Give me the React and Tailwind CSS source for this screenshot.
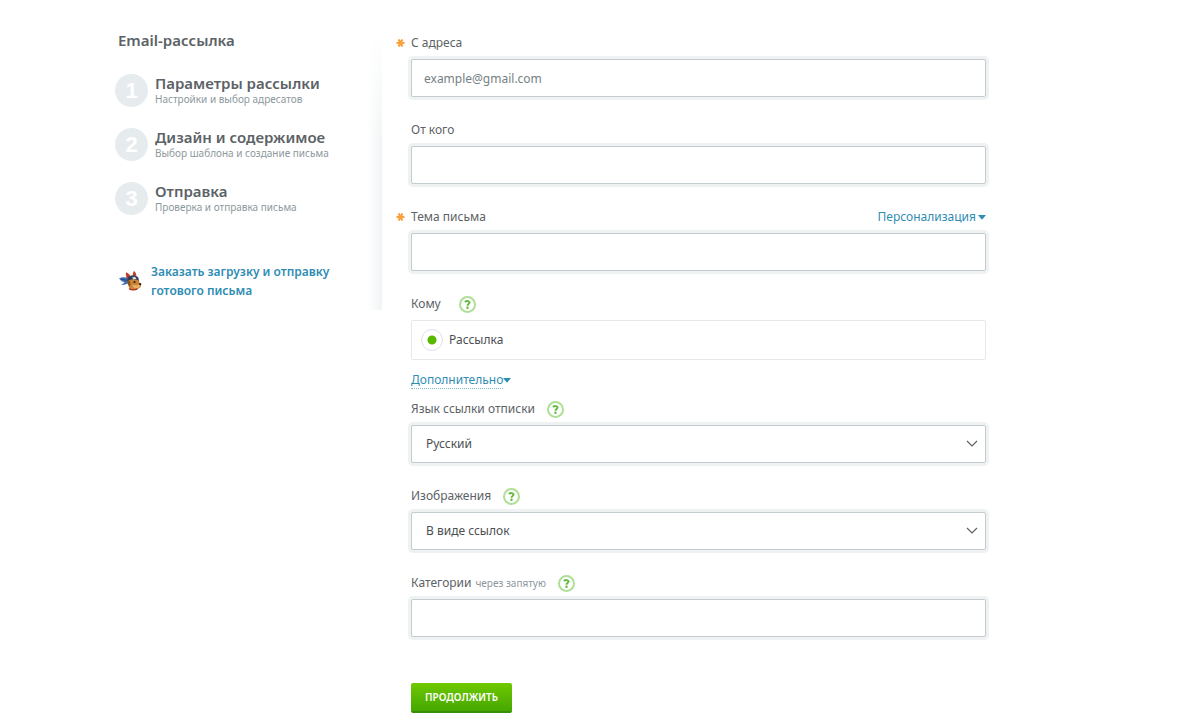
import { useState } from "react";
import clsx from "clsx";

const steps = [
  { title: "Параметры рассылки", text: "Настройки и выбор адресатов" },
  { title: "Дизайн и содержимое", text: "Выбор шаблона и создание письма" },
  { title: "Отправка", text: "Проверка и отправка письма" },
];

const controlClass =
  "block w-full h-[38px] px-3 rounded-xs border border-[#c3cccf] bg-white text-[12px] text-[#4b4f51] shadow-[0_0_0_3px_#eff2f2] outline-none placeholder:text-[#757f83] focus:border-[#8fb8c8]";

const Mascot = () => (
  <svg width="24" height="22" viewBox="0 0 24 22" className="shrink-0" aria-hidden="true">
    <path d="M1 8.500C4 6.500 7 7 11 8l1 4.500C8.500 14 6 15.500 3 15c2-1 3-2 3.500-3C4.500 12 3 11 1 8.500z" fill="#3f6fb8" />
    <path d="M3 9c3 .8 5 1.500 8 1.200" stroke="#24427c" strokeWidth="1" fill="none" />
    <path d="M8 2.200c2 .8 3.500 2 4.500 4L9 8.500C8 6.500 7.600 4.500 8 2.200z" fill="#c33a2d" />
    <path d="M16 1c1.600 1.200 2.400 3 2.300 5l-3.500-.5C14.800 3.800 15 2.400 16 1z" fill="#c33a2d" />
    <path d="M9.500 8c2-3.500 8.500-4 11 0l.5 4-11 3z" fill="#343a55" />
    <path d="M10 11c3-2 7-2.500 10.500-.5 1 1.500 1.600 3 2.500 4.500.3 1.800-1 3-2.500 3.500-2.500 2-6.500 2-8.500.5C10.500 17 9.500 14 10 11z" fill="#c98535" />
    <path d="M14 15c2 .5 5 .5 8-.5.5 2-1 3.200-3 3.800-2 .3-4-.8-5-3.300z" fill="#e8b468" />
    <path d="M9.500 9.500c2.500 1 3.500 3.500 2.500 7-2-1.500-3-4-2.500-7z" fill="#8a4b20" />
    <path d="M14 7.500l3-.8 1.500 2-3 .8z" fill="#d7dde8" />
    <circle cx="16.500" cy="12" r="1" fill="#231a16" />
    <circle cx="22.200" cy="14.200" r="1.100" fill="#231a16" />
    <path d="M11 18.500c2 1.800 6 2 8.500.3" stroke="#a83225" strokeWidth="1.200" fill="none" />
  </svg>
);

const Caret = () => (
  <svg width="8" height="5" viewBox="0 0 8 5" className="shrink-0" aria-hidden="true">
    <path d="M0 0h8L4 4.800z" fill="#2f8db3" />
  </svg>
);

const Help = () => (
  <button
    type="button"
    aria-label="Справка"
    className="ml-3 flex size-[17px] shrink-0 items-center justify-center rounded-full border-2 border-[#addf95] bg-white"
  >
    <svg width="7" height="9" viewBox="0 0 7 9" fill="none" aria-hidden="true">
      <path d="M1 2.200C2.200.7 5.500.7 5.500 2.600 5.500 4 3.500 4 3.500 5.700" stroke="#62bb3c" strokeWidth="2" />
      <circle cx="3.500" cy="7.800" r="1.200" fill="#62bb3c" />
    </svg>
  </button>
);

const Asterisk = () => (
  <svg
    width="9"
    height="8"
    viewBox="0 0 9 8"
    className="absolute top-1.5 -left-[15px]"
    aria-hidden="true"
  >
    <path d="M.5 4h8M2.600.5l3.800 7M6.400.5l-3.800 7" stroke="#f9a13c" strokeWidth="2.200" />
  </svg>
);

const Field = ({ id, label, hint, required, help, action, children }) => (
  <div className="mb-[23px]">
    <div className="relative mb-1.5 flex h-5 items-center">
      {required && <Asterisk />}
      <label htmlFor={id}>
        {label}
        {hint && <span className="ml-1 text-[10px] text-[#8d989d]">{hint}</span>}
      </label>
      {help && <Help />}
      {action}
    </div>
    {children}
  </div>
);

const Select = ({ id, options }) => (
  <div className="relative">
    <select id={id} className={clsx(controlClass, "appearance-none pl-3.5 pr-10")}>
      {options.map((option) => (
        <option key={option}>{option}</option>
      ))}
    </select>
    <svg
      width="12"
      height="8"
      viewBox="0 0 12 8"
      fill="none"
      className="pointer-events-none absolute top-[15px] right-2"
      aria-hidden="true"
    >
      <path d="M1 1l5 5 5-5" stroke="#5d6163" strokeWidth="1.200" />
    </svg>
  </div>
);

const Sidebar = () => (
  <aside className="flex h-[280px] w-[267px] shrink-0 justify-between">
    <div className="w-[230px]">
      <h1 className="ml-[3px] h-5 text-[15px] leading-5 font-semibold">Email-рассылка</h1>
      <ol className="mt-[22px] flex flex-col gap-[18px]">
        {steps.map((step, index) => (
          <li key={step.title} className="flex items-center gap-[7px]">
            <span className="flex size-[33px] shrink-0 items-center justify-center rounded-full bg-[#e6ecee] font-['Liberation_Sans',sans-serif] text-[22px] font-bold text-white">
              {index + 1}
            </span>
            <div className="h-9 whitespace-nowrap">
              <h2 className="pt-px text-[15px] leading-5 font-semibold">{step.title}</h2>
              <p className="text-[10px] leading-3 text-[#8d989d]">{step.text}</p>
            </div>
          </li>
        ))}
      </ol>
      <a
        href="#order"
        className="mt-[46px] ml-[3px] flex items-center gap-[9px] text-[12px] leading-[19px] font-semibold text-[#2f8db3]"
      >
        <Mascot />
        <span className="whitespace-nowrap">
          Заказать загрузку и отправку
          <br />
          готового письма
        </span>
      </a>
    </div>
    <div className="w-[15px] bg-linear-to-r from-white to-[#f1f4f5] mask-t-from-60%" />
  </aside>
);

const App = () => {
  const [email, setEmail] = useState("");

  return (
    <div className="flex min-h-screen items-start bg-white pt-[30px] pr-[202px] pl-[115px] font-['Noto_Sans',sans-serif] text-[12px] text-[#5c6265]">
      <Sidebar />

      <form className="ml-[29px] min-w-0 flex-1 pt-[3px]" onSubmit={(e) => e.preventDefault()}>
        <Field id="from" label="С адреса" required>
          <input
            id="from"
            type="email"
            placeholder="example@gmail.com"
            value={email}
            onChange={(e) => setEmail(e.target.value)}
            className={controlClass}
          />
        </Field>

        <Field id="sender" label="От кого">
          <input id="sender" type="text" className={controlClass} />
        </Field>

        <Field
          id="subject"
          label="Тема письма"
          required
          action={
            <button type="button" className="ml-auto flex items-center gap-0.5 text-[#2f8db3]">
              Персонализация
              <Caret />
            </button>
          }
        >
          <input id="subject" type="text" className={controlClass} />
        </Field>

        {/* Recipients */}
        <fieldset aria-labelledby="recipients">
          <div className="mb-1.5 flex h-5 items-center gap-1.5">
            <span id="recipients">Кому</span>
            <Help />
          </div>
          <div className="flex h-10 items-center rounded-xs border border-[#e5e9ea] pl-[9px]">
            <label className="flex items-center gap-1.5 text-[#4b4f51]">
              <input
                type="radio"
                name="list"
                defaultChecked
                className="size-[22px] appearance-none rounded-full border border-[#dde2e4] bg-white checked:bg-[radial-gradient(circle,#58b800_4px,transparent_5px)]"
              />
              Рассылка
            </label>
          </div>
        </fieldset>

        <button type="button" className="mt-[11px] mb-2.5 flex h-[18px] items-center text-[#2f8db3]">
          <span className="border-b border-dotted border-[#7fb9d0] leading-4">Дополнительно</span>
          <Caret />
        </button>

        <Field id="lang" label="Язык ссылки отписки" help>
          <Select id="lang" options={["Русский", "English"]} />
        </Field>

        <Field id="images" label="Изображения" help>
          <Select id="images" options={["В виде ссылок", "Вложениями"]} />
        </Field>

        <Field id="categories" label="Категории" hint="через запятую" help>
          <input id="categories" type="text" className={controlClass} />
        </Field>

        <button
          type="submit"
          className="mt-[23px] h-[30px] rounded-xs border-b-2 border-[#3a8e0c] bg-linear-to-b from-[#6fc800] to-[#45a800] px-3.5 text-[10px] font-semibold text-white uppercase"
        >
          Продолжить
        </button>
      </form>
    </div>
  );
};

export default App;
